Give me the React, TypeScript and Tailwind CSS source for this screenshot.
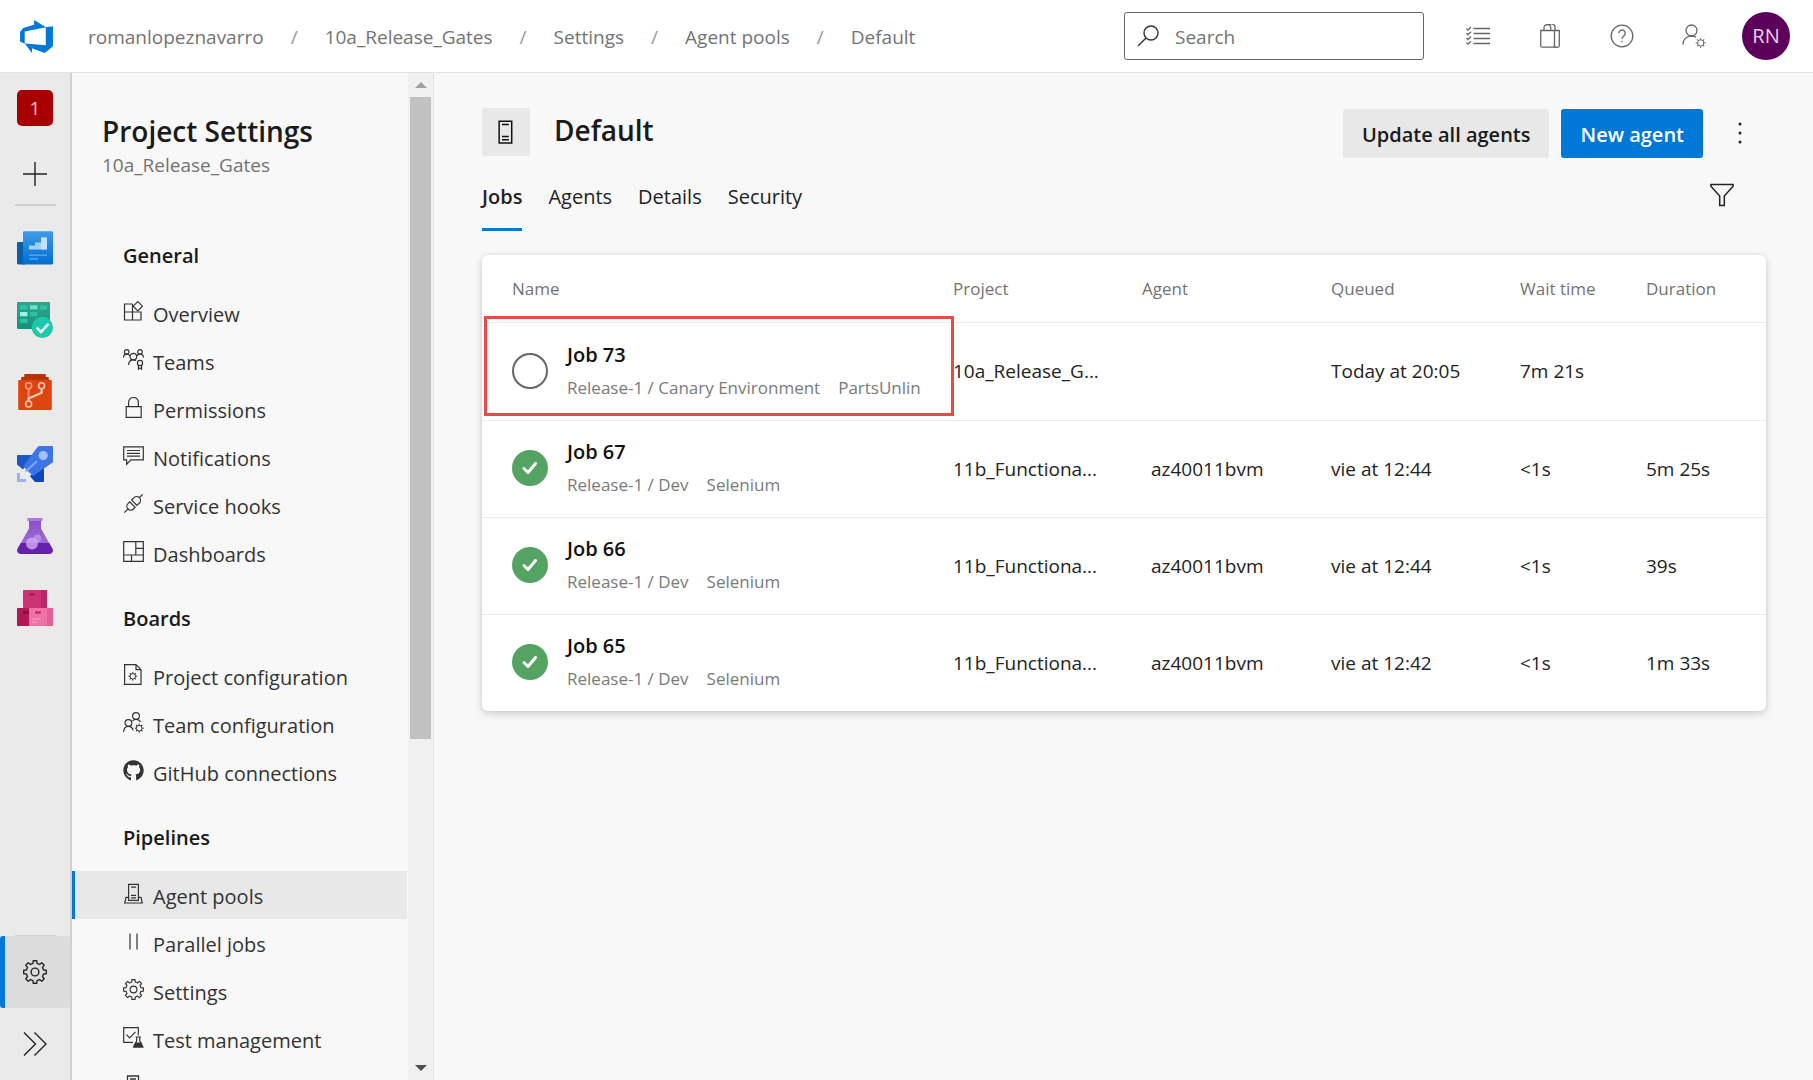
import React from "react";
import type { ReactNode } from "react";
import { FaGithub } from "react-icons/fa";

/* ---------- icon helpers ---------- */

function gearPath(cx: number, cy: number, outer: number, inner: number, teeth = 8) {
  const step = (Math.PI * 2) / teeth;
  const pts: string[] = [];
  for (let i = 0; i < teeth; i++) {
    const a = i * step - Math.PI / 2;
    const corners: [number, number][] = [
      [a - step * 0.3, inner],
      [a - step * 0.2, outer],
      [a + step * 0.2, outer],
      [a + step * 0.3, inner],
    ];
    corners.forEach(([t, r]) => pts.push(`${(cx + Math.cos(t) * r).toFixed(2)} ${(cy + Math.sin(t) * r).toFixed(2)}`));
  }
  return `M${pts.join("L")}Z`;
}

/* Small gear badge: a thin ring with short teeth around it. */
function SmallGear({ cx, cy, r }: { cx: number; cy: number; r: number }) {
  return (
    <g strokeWidth="1">
      <circle cx={cx} cy={cy} r={r * 0.62} />
      {[0, 45, 90, 135, 180, 225, 270, 315].map((a) => (
        <path key={a} d={`M${cx} ${cy - r * 0.62}V${cy - r}`} transform={`rotate(${a} ${cx} ${cy})`} />
      ))}
    </g>
  );
}

function Line({ children, className = "size-[21px]", box = 21, weight = 1.2 }: { children: ReactNode; className?: string; box?: number; weight?: number }) {
  return (
    <svg
      viewBox={`0 0 ${box} ${box}`}
      className={`${className} shrink-0`}
      fill="none"
      stroke="currentColor"
      strokeWidth={weight}
      aria-hidden="true"
    >
      {children}
    </svg>
  );
}

const GearIcon = ({ className }: { className?: string }) => (
  <Line className={className}>
    <path d={gearPath(10.5, 10.5, 10, 7.7)} strokeLinejoin="round" />
    <circle cx="10.5" cy="10.5" r="3.4" />
  </Line>
);

const OverviewIcon = () => (
  <Line>
    <path d="M9.5 3H1.5V19H18V11H1.5M9.5 3V19" />
    <path d="M14.8.6 19.4 5.2 14.8 9.8 10.2 5.2Z" />
  </Line>
);
const TeamsIcon = () => (
  <Line>
    <circle cx="3.7" cy="2.9" r="2.3" />
    <circle cx="17" cy="2.9" r="2.3" />
    <circle cx="10.4" cy="7.6" r="3.3" />
    <path d="M.5 8.6C.6 6.4 1.9 5.2 3.7 5.2c1.4 0 2.5.7 3.2 1.7M20.5 8.6c-.1-2.2-1.5-3.4-3.4-3.4-1.4 0-2.5.7-3.2 1.7M5.6 16c.1-3.2 2-5.1 4.8-5.1 1 0 1.9.2 2.6.7" />
    <circle cx="17" cy="14" r="2.6" />
    <path d="M15.4 16.2V20.2L17 18.9 18.6 20.2V16.2" />
  </Line>
);
const LockIcon = () => (
  <Line>
    <path d="M3.2 9.7H18.2V20.4H3.2ZM5.6 9.7V5.4a4.9 4.9 0 0 1 9.8 0V9.7" />
  </Line>
);
const CommentIcon = () => (
  <Line>
    <path d="M.7 1.8H20.3V14.8H8L3.6 19.2V14.8H.7ZM4 5.5H17M4 8.3H17M4 11.1H17" />
  </Line>
);
const PlugIcon = () => (
  <Line>
    <g transform="rotate(-45 10.5 10.5)">
      <path d="M-2.5 10.5H2M19 10.5H23.5M9 6.7H6.500a3.8 3.8 0 0 0 0 7.6H9ZM11.6 6.2V14.8M11.6 6.7H15a3.8 3.8 0 0 1 0 7.6H11.6M9 6.2V14.8" />
    </g>
  </Line>
);
const DashboardIcon = () => (
  <Line>
    <path d="M.7.7H20.3V20.3H.7ZM12.8.7V14M12.8 7.3H20.3M.7 14H20.3M8.5 14V20.3" />
  </Line>
);
const FileGearIcon = () => (
  <Line>
    <path d="M1.6.7H13L18 5.7V20.3H1.6ZM13 .7V5.7H18" />
    <SmallGear cx={9.8} cy={12.3} r={4.4} />
  </Line>
);
const TeamGearIcon = () => (
  <Line>
    <circle cx="13" cy="4" r="3.4" />
    <circle cx="5.4" cy="11" r="3.4" />
    <path d="M.6 20c.2-3.5 2-5.6 4.8-5.6 2.5 0 4.1 1.5 4.7 4M9.4 9c.8-1.1 2-1.6 3.6-1.6 2 0 3.6.9 4.5 2.7" />
    <SmallGear cx={16.2} cy={16.2} r={4.6} />
  </Line>
);
const GithubIcon = () => <FaGithub className="size-[21px] shrink-0" aria-hidden="true" />;
const PoolIcon = () => (
  <Line>
    <path d="M5.6 17.4V1.4H15.4V17.4ZM5.6 14.4H3L1.7 20H19.3L18 14.4H15.4M8 4.2H13M8 12.4H13M8 14.8H13" />
  </Line>
);
const ParallelIcon = () => (
  <Line>
    <path d="M7 2.5V18.5M14 2.5V18.5" />
  </Line>
);
const TestIcon = () => (
  <Line>
    <path d="M15.3 8.5V.7H.7V15.3H10M3.5 7.6 6.6 10.8 12.5 4.8" />
    <path d="M13.7 10V13.8L10.8 19.9H19.7L16.8 13.8V10M12.6 10H18" />
    <path d="M12.6 16H17.900L19.7 19.9H10.8Z" fill="currentColor" />
  </Line>
);
const ServerIcon = ({ className }: { className?: string }) => (
  <Line className={className} weight={1.3}>
    <path d="M4.500 1H15.500V20.200H4.500ZM7 4H13M7 14.500H13M7 17.300H13" />
  </Line>
);

/* ---------- left rail product icons ---------- */

const Logo = () => (
  <svg viewBox="0 0 18 18" className="size-[37px]" fill="#0078d7" aria-hidden="true">
    <path d="M17 4v9.740l-4 3.280-6.200-2.260V17l-3.510-4.590 10.230.8V4.440zm-3.410.49L7.850 1v2.290L2.580 4.840 1 6.870v4.610l2.260 1V6.570z" />
  </svg>
);

const railItems: { label: string; art: ReactNode }[] = [
  {
    label: "Overview",
    art: (
      <>
        <defs>
          <linearGradient id="ov" x1="0" y1="0" x2="0" y2="1">
            <stop offset="0" stopColor="#3f9ae6" />
            <stop offset="1" stopColor="#006fd0" />
          </linearGradient>
        </defs>
        <path d="M.5 6H4V17.200H.7A.7.7 0 0 1 0 16.500V6.500A.5.5 0 0 1 .5 6Z" fill="#0d5ea8" />
        <path d="M3.500.6H17.500a.5.5 0 0 1 .5.5V16.700a.5.5 0 0 1-.5.5H2.300A.7.7 0 0 0 3 16.500V1.100A.5.5 0 0 1 3.500.6Z" fill="url(#ov)" />
        <path d="M6 9.700V7.800H9V6.200H12V3.800H15V9.700Z" fill="#9fd0ff" />
        <path d="M12 3.800H15V9.700H12Z" fill="#c4e3ff" />
        <path d="M6 12.600H15M6 14.400H10.500" stroke="#5fb0f5" strokeWidth=".6" />
      </>
    ),
  },
  {
    label: "Boards",
    art: (
      <>
        <defs>
          <linearGradient id="bo" x1="0" y1="0" x2="0" y2="1">
            <stop offset="0" stopColor="#37a38c" />
            <stop offset="1" stopColor="#16937a" />
          </linearGradient>
        </defs>
        <rect width="16.500" height="13.500" rx=".5" fill="url(#bo)" />
        <path d="M1.500 1.600H5.200V3.700H1.500ZM11.400 1.600H15.100V3.700H11.400ZM6.500 5H10.200V7.100H6.500ZM1.500 8.400H5.200V10.500H1.500Z" fill="#2cc4a8" />
        <path d="M6.500 1.600H10.200V3.700H6.500Z" fill="#66e4cc" />
        <path d="M1.500 5H5.200V7.100H1.500Z" fill="#93fbe5" />
        <circle cx="12.700" cy="12.700" r="5.300" fill="#1ec8ab" />
        <path d="M9.900 12.800 12 15 15.700 10.900" fill="none" stroke="#e3fff9" strokeWidth="1.300" />
      </>
    ),
  },
  {
    label: "Repos",
    art: (
      <>
        <path d="M3.600.3A.4.4 0 0 1 4 0H14a.4.4 0 0 1 .4.3V1.500H15.600a.4.4 0 0 1 .3.4V3.500H2.100V1.900a.4.4 0 0 1 .3-.4H3.600Z" fill="#b73300" />
        <rect x=".6" y="3" width="16.800" height="15" rx=".6" fill="#dc4410" />
        <path d="M5.800 7.300V12.500" stroke="#f08a66" strokeWidth="1.100" />
        <g fill="none" stroke="#ffc7b2">
          <circle cx="5.800" cy="5.900" r="1.500" strokeWidth=".8" stroke="#f6a284" />
          <circle cx="12.300" cy="5.900" r="1.500" strokeWidth=".8" />
          <circle cx="5.800" cy="15" r="1.500" strokeWidth=".8" />
          <path d="M12.300 7.400V9.400L5.800 12.200V13.500" strokeWidth="1.100" />
        </g>
      </>
    ),
  },
  {
    label: "Pipelines",
    art: (
      <>
        <path d="M.4 4.500H8L4 10.500 3 11.800 0 9.300V4.900A.4.4 0 0 1 .4 4.500Z" fill="#1f56c4" />
        <path d="M13.500 9.500V17.600a.4.4 0 0 1-.4.4H9L6.400 15Z" fill="#0f45bd" />
        <path d="M10.500.3A.8.8 0 0 1 11.100 0H17.600a.4.4 0 0 1 .4.4V7.600a1 1 0 0 1-.4.8L8 15 3 10.100Z" fill="#3d74e6" />
        <circle cx="13.100" cy="4.800" r="2.300" fill="#a3c1fb" />
        <path d="M4.300 12.800 9.900 7.600" stroke="#7ba4f5" strokeWidth="1.100" />
        <path d="M2.900 11.900 6.300 15.200" stroke="#eaeaea" strokeWidth="1.300" strokeDasharray="1.200 .6" />
        <path d="M0 13.500H1.500V16.500H4.500V18H0Z" fill="#97b4f1" />
      </>
    ),
  },
  {
    label: "Test Plans",
    art: (
      <>
        <defs>
          <linearGradient id="te" x1="0" y1="0" x2="0" y2="1">
            <stop offset="0" stopColor="#8a50c8" />
            <stop offset="1" stopColor="#a77ad8" />
          </linearGradient>
        </defs>
        <path d="M6 1.500H12V5.300L17.700 15.400A1.800 1.800 0 0 1 16.100 18H1.900A1.800 1.800 0 0 1 .3 15.400L6 5.300Z" fill="url(#te)" />
        <rect x="5.200" width="7.600" height="1.500" rx=".3" fill="#a77bdb" />
        <path d="M1.900 12.500H16.100L17.700 15.400A1.800 1.800 0 0 1 16.100 18H1.900A1.800 1.800 0 0 1 .3 15.400Z" fill="#6422ac" />
        <circle cx="7.500" cy="12.700" r="3" fill="#d3a9f8" fillOpacity=".8" />
        <circle cx="10.200" cy="10.200" r="1.900" fill="#cfa6f6" fillOpacity=".6" />
      </>
    ),
  },
  {
    label: "Artifacts",
    art: (
      <>
        <rect x="3" width="12" height="9" rx=".4" fill="#cf3272" />
        <path d="M12 0H14.600A.4.4 0 0 1 15 .4V9H12Z" fill="#bd2765" />
        <rect x="6" y="1.700" width="3" height="1.100" rx=".5" fill="#9c1650" />
        <rect y="9" width="7" height="9" rx=".4" fill="#b01858" />
        <rect x="3" y="10.600" width="3" height="1.300" rx=".5" fill="#850b3d" />
        <rect x="6" y="9" width="12" height="9" rx=".4" fill="#ee72a6" />
        <path d="M15 9H17.600A.4.4 0 0 1 18 9.400V17.600A.4.4 0 0 1 17.600 18H15Z" fill="#e35f97" />
        <rect x="9" y="10.600" width="3" height="1.300" rx=".6" fill="#c42a69" />
        <path d="M7.500 14.500H12M7.500 16.100H10.200" stroke="#f79fc5" strokeWidth=".6" />
      </>
    ),
  },
];

/* ---------- data ---------- */

const crumbs = ["romanlopeznavarro", "10a_Release_Gates", "Settings", "Agent pools", "Default"];

const sections: { title: string; items: { label: string; icon: ReactNode; active?: boolean }[] }[] = [
  {
    title: "General",
    items: [
      { label: "Overview", icon: <OverviewIcon /> },
      { label: "Teams", icon: <TeamsIcon /> },
      { label: "Permissions", icon: <LockIcon /> },
      { label: "Notifications", icon: <CommentIcon /> },
      { label: "Service hooks", icon: <PlugIcon /> },
      { label: "Dashboards", icon: <DashboardIcon /> },
    ],
  },
  {
    title: "Boards",
    items: [
      { label: "Project configuration", icon: <FileGearIcon /> },
      { label: "Team configuration", icon: <TeamGearIcon /> },
      { label: "GitHub connections", icon: <GithubIcon /> },
    ],
  },
  {
    title: "Pipelines",
    items: [
      { label: "Agent pools", icon: <PoolIcon />, active: true },
      { label: "Parallel jobs", icon: <ParallelIcon /> },
      { label: "Settings", icon: <GearIcon /> },
      { label: "Test management", icon: <TestIcon /> },
      { label: "", icon: <ServerIcon /> },
    ],
  },
];

type Job = {
  name: string;
  source: string;
  definition: string;
  project: string;
  agent: string;
  queued: string;
  wait: string;
  duration: string;
  done: boolean;
};

const jobs: Job[] = [
  { name: "Job 73", source: "Release-1 / Canary Environment", definition: "PartsUnlin", project: "10a_Release_G...", agent: "", queued: "Today at 20:05", wait: "7m 21s", duration: "", done: false },
  { name: "Job 67", source: "Release-1 / Dev", definition: "Selenium", project: "11b_Functiona...", agent: "az40011bvm", queued: "vie at 12:44", wait: "<1s", duration: "5m 25s", done: true },
  { name: "Job 66", source: "Release-1 / Dev", definition: "Selenium", project: "11b_Functiona...", agent: "az40011bvm", queued: "vie at 12:44", wait: "<1s", duration: "39s", done: true },
  { name: "Job 65", source: "Release-1 / Dev", definition: "Selenium", project: "11b_Functiona...", agent: "az40011bvm", queued: "vie at 12:42", wait: "<1s", duration: "1m 33s", done: true },
];

/* ---------- page parts ---------- */

function IconButton({ label, children }: { label: string; children: ReactNode }) {
  return (
    <button type="button" aria-label={label} className="flex size-12 items-center justify-center text-[#666]">
      {children}
    </button>
  );
}

function TopBar() {
  return (
    <header className="flex h-[73px] shrink-0 items-center border-b border-[#e2e2e2] bg-white pr-[23px]">
      <a href="#home" aria-label="Azure DevOps" className="flex w-[72px] shrink-0 justify-center">
        <Logo />
      </a>
      <nav aria-label="Breadcrumb" className="min-w-0 flex-1 pl-4">
        <ol className="flex items-center pt-0.5 text-[19px] leading-7 whitespace-nowrap text-[#737373]">
          {crumbs.map((c, i) => (
            <li key={c} className="flex items-center">
              {i > 0 && <span className="w-[61px] text-center text-[#999]">/</span>}
              <a href={`#${c}`}>{c}</a>
            </li>
          ))}
        </ol>
      </nav>
      <label className="flex h-12 w-[300px] shrink-0 items-center gap-4 rounded-[3px] border border-[#666] bg-white pl-3">
        <Line className="size-[22px] text-[#333]" box={22} weight={1.4}>
          <circle cx="14" cy="8" r="7" />
          <path d="M9 13 1 21" />
        </Line>
        <input
          type="text"
          aria-label="Search"
          placeholder="Search"
          className="min-w-0 flex-1 bg-transparent pt-0.5 text-[19px] leading-7 outline-none placeholder:text-[#737373]"
        />
      </label>
      <div className="ml-[30px] flex items-center gap-6">
        <IconButton label="Work items">
          <Line className="size-6" box={24} weight={1.3}>
            <path d="M7.500 4.500H24M7.500 9.500H24M7.500 14.500H24M7.500 19.500H24" />
            <path d="M.5 4.500 2 6 5 3M.5 9.300 2 10.800 5 7.800M.5 14 2 15.500 5 12.500M.5 18.700 2 20.200 5 17.200" />
          </Line>
        </IconButton>
        <IconButton label="Marketplace">
          <Line className="size-6" box={24} weight={1.3}>
            <path d="M2.700 6.500H21.300V21.700a1.500 1.500 0 0 1-1.500 1.500H4.200a1.500 1.500 0 0 1-1.500-1.500ZM16.500 6.500V21.500a1.500 1.500 0 0 0 3 1.500M6 6.500V4a3.400 3.400 0 0 1 6.800 0V6.500M9.500 1.200A3.400 3.400 0 0 1 11.500.7 3.400 3.400 0 0 1 17 4V6.500" />
          </Line>
        </IconButton>
        <IconButton label="Help">
          <Line className="size-6" box={24} weight={1.3}>
            <circle cx="12" cy="12" r="10.800" />
            <path d="M8.800 9.200a3.200 3.200 0 1 1 5 2.700c-1.200.9-1.800 1.500-1.800 3.100M12 16.700V18.300" />
          </Line>
        </IconButton>
        <IconButton label="User settings">
          <Line className="size-6" box={24} weight={1.3}>
            <circle cx="9.500" cy="6.500" r="5.500" />
            <path d="M.8 20.500C1 15.500 4.400 12 9.500 12c2 0 3.500.5 4.700 1.300" />
            <SmallGear cx={18.7} cy={18.9} r={5} />
          </Line>
        </IconButton>
        <button type="button" aria-label="Account" className="flex size-12 items-center justify-center rounded-full bg-[#5c005c] text-[20px] text-[#e6d3e6]">
          RN
        </button>
      </div>
    </header>
  );
}

function Rail() {
  return (
    <nav aria-label="Products" className="flex w-[72px] shrink-0 flex-col items-center border-r-2 border-[#d0d0d0] bg-[#eaeaea]">
      <a href="#project" className="flex h-[70px] items-center">
        <span className="flex size-9 items-center justify-center rounded-[5px] bg-[#a80000] text-[19px] text-[#eccccc]">1</span>
      </a>
      <button type="button" aria-label="Add" className="flex h-[61px] items-center text-[#222]">
        <Line className="size-6" box={24} weight={1.4}>
          <path d="M12 0V24M0 12H24" />
        </Line>
      </button>
      <div className="mb-1.5 h-0.5 w-[41px] bg-[#cfcfcf]" />
      {railItems.map((r) => (
        <a key={r.label} href={`#${r.label}`} aria-label={r.label} className="flex h-[72px] items-center">
          <svg viewBox="0 0 18 18" className="size-9" aria-hidden="true">
            {r.art}
          </svg>
        </a>
      ))}
      <div className="mt-auto h-px w-[41px] bg-[#d2d2d2]" />
      <a href="#settings" aria-label="Project settings" className="flex h-[72px] w-full items-center rounded-[3px] border-l-[5px] border-[#0078d7] bg-[#dcdcdc] pl-[18px] text-[#222]">
        <GearIcon className="size-6" />
      </a>
      <button type="button" aria-label="Expand" className="flex h-[72px] items-center text-[#222]">
        <Line className="size-6" box={24} weight={1.4}>
          <path d="M1 .5 12.500 12 1 23.500M11.500.5 23 12 11.500 23.500" />
        </Line>
      </button>
    </nav>
  );
}

function SettingsPanel() {
  return (
    <aside className="flex w-[362px] shrink-0 border-r border-[#e4e4e4]">
      <div className="min-w-0 flex-1 overflow-hidden pt-10">
        <div className="pb-[35px] pl-[30px]">
          <h2 className="text-[28px] leading-9 font-semibold text-[#1a1a1a]">Project Settings</h2>
          <p className="mt-0.5 text-[19px] leading-7 text-[#737373]">10a_Release_Gates</p>
        </div>
        {sections.map((s) => (
          <section key={s.title}>
            <h3 className="pt-7 pb-[19px] pl-[51px] text-[20px] leading-7 font-semibold text-[#1a1a1a]">{s.title}</h3>
            {s.items.map((it) => (
              <a
                key={it.label}
                href={`#${it.label}`}
                aria-label={it.label || "Retention"}
                className={`mr-px flex h-12 items-center gap-[9px] border-l-[3px] pl-12 text-[20px] text-[#333] ${it.active ? "border-[#0078d7] bg-[#e8e8e8]" : "border-transparent"}`}
              >
                <span className="pb-1">{it.icon}</span>
                <span className="pt-1 leading-7">{it.label}</span>
              </a>
            ))}
          </section>
        ))}
      </div>
      <div className="flex w-[25px] shrink-0 flex-col items-center bg-[#f0f0f0]">
        <div className="flex h-6 shrink-0 items-center justify-center">
          <svg viewBox="0 0 12 6" className="h-1.5 w-3" fill="#a0a0a0" aria-hidden="true">
            <path d="M6 0 12 6H0Z" />
          </svg>
        </div>
        <div className="w-[21px] basis-[642px] bg-[#c1c1c1]" />
        <div className="mt-auto flex h-6 shrink-0 items-center justify-center">
          <svg viewBox="0 0 12 6" className="h-1.5 w-3" fill="#505050" aria-hidden="true">
            <path d="M6 6 12 0H0Z" />
          </svg>
        </div>
      </div>
    </aside>
  );
}

function JobsTable() {
  const th = "h-[68px] border-b border-[#eaeaea] p-0 font-medium";
  return (
    <div className="mt-6 rounded-md bg-white shadow-[0_3px_8px_rgba(0,0,0,0.16),0_0_4px_rgba(0,0,0,0.08)]">
      <table className="w-full table-fixed border-separate border-spacing-0 text-left">
        <thead className="text-[17px] text-[#737373]">
          <tr>
            <th className={`${th} pl-[30px]`}>Name</th>
            <th className={`${th} w-[189px]`}>Project</th>
            <th className={`${th} w-[189px]`}>Agent</th>
            <th className={`${th} w-[189px]`}>Queued</th>
            <th className={`${th} w-[126px]`}>Wait time</th>
            <th className={`${th} w-[120px]`}>Duration</th>
          </tr>
        </thead>
        <tbody className="text-[19px] text-[#222]">
          {jobs.map((j, i) => {
            const td = i > 0 ? "h-[97px] border-t border-[#eaeaea] p-0" : "h-[97px] p-0";
            return (
              <tr key={j.name}>
                <td className={`${td} relative`}>
                  <div className="flex items-center gap-[19px] pb-0.5 pl-[30px]">
                    {j.done ? (
                      <svg viewBox="0 0 36 36" className="size-9 shrink-0" role="img" aria-label="Succeeded">
                        <circle cx="18" cy="18" r="18" fill="#55a362" />
                        <path d="M12 18.500 16 22.500 23.500 13.500" fill="none" stroke="#fff" strokeWidth="3" strokeLinecap="round" strokeLinejoin="round" />
                      </svg>
                    ) : (
                      <svg viewBox="0 0 36 36" className="size-9 shrink-0" role="img" aria-label="Queued">
                        <circle cx="18" cy="18" r="17" fill="none" stroke="#666" strokeWidth="2" />
                      </svg>
                    )}
                    <div className="min-w-0 pb-px">
                      <div className="text-[20px] leading-7 font-semibold text-[#111]">{j.name}</div>
                      <div className="mt-[7px] flex gap-[18px] text-[17px] leading-6 whitespace-nowrap text-[#7a7a7a]">
                        <span>{j.source}</span>
                        <span>{j.definition}</span>
                      </div>
                    </div>
                  </div>
                  {!j.done && <div className="pointer-events-none absolute -top-[7px] -right-px bottom-1 left-0.5 border-[3px] border-[#e84b45]" />}
                </td>
                <td className={td}>{j.project}</td>
                <td className={`${td} pl-[9px]`}>{j.agent}</td>
                <td className={td}>{j.queued}</td>
                <td className={td}>{j.wait}</td>
                <td className={td}>{j.duration}</td>
              </tr>
            );
          })}
        </tbody>
      </table>
    </div>
  );
}

function Main() {
  const tabs = ["Jobs", "Agents", "Details", "Security"];
  const action = "mt-px h-[49px] rounded-[3px] px-[19px] pt-0.5 text-[20px] font-semibold";
  return (
    <main className="min-w-0 flex-1 pt-[35px] pr-[47px] pl-12">
      <div className="flex items-start">
        <div className="flex size-12 items-center justify-center rounded-[3px] bg-[#e8e8e8] text-[#111]">
          <ServerIcon className="size-6" />
        </div>
        <h1 className="mt-1 ml-6 flex-1 text-[28px] leading-9 font-semibold text-[#1a1a1a]">Default</h1>
        <button type="button" className={`${action} bg-[#e8e8e8] text-[#1a1a1a]`}>
          Update all agents
        </button>
        <button type="button" className={`${action} ml-3 bg-[#0078d7] text-white`}>
          New agent
        </button>
        <button type="button" aria-label="More actions" className="mt-px mr-0.5 ml-[13px] flex size-12 items-center justify-center text-[#222]">
          <svg viewBox="0 0 4 22" className="h-[22px] w-1" fill="currentColor" aria-hidden="true">
            <circle cx="2" cy="2" r="1.500" />
            <circle cx="2" cy="11" r="1.500" />
            <circle cx="2" cy="20" r="1.500" />
          </svg>
        </button>
      </div>
      <div className="flex h-[73px] items-end">
        <div role="tablist" className="flex flex-1 gap-[26px] text-[20px] leading-7 text-[#222]">
          {tabs.map((t, i) => (
            <button
              key={t}
              type="button"
              role="tab"
              aria-selected={i === 0}
              className={`border-b-[3px] pb-[17px] ${i === 0 ? "border-[#0078d7] font-semibold" : "border-transparent"}`}
            >
              {t}
            </button>
          ))}
        </div>
        <button type="button" aria-label="Filter" className="mr-8 mb-6 text-[#222]">
          <Line className="size-6" box={24} weight={1.5}>
            <path d="M.9 1.500H23.100V3.300L14.300 13V22.500H9.700V13L.9 3.300Z" />
          </Line>
        </button>
      </div>
      <JobsTable />
    </main>
  );
}

export default function App() {
  return (
    <div className="flex h-screen flex-col overflow-hidden bg-[#f8f8f8] font-['Open_Sans','Noto_Sans',sans-serif]">
      <TopBar />
      <div className="flex min-h-0 flex-1">
        <Rail />
        <SettingsPanel />
        <Main />
      </div>
    </div>
  );
}
